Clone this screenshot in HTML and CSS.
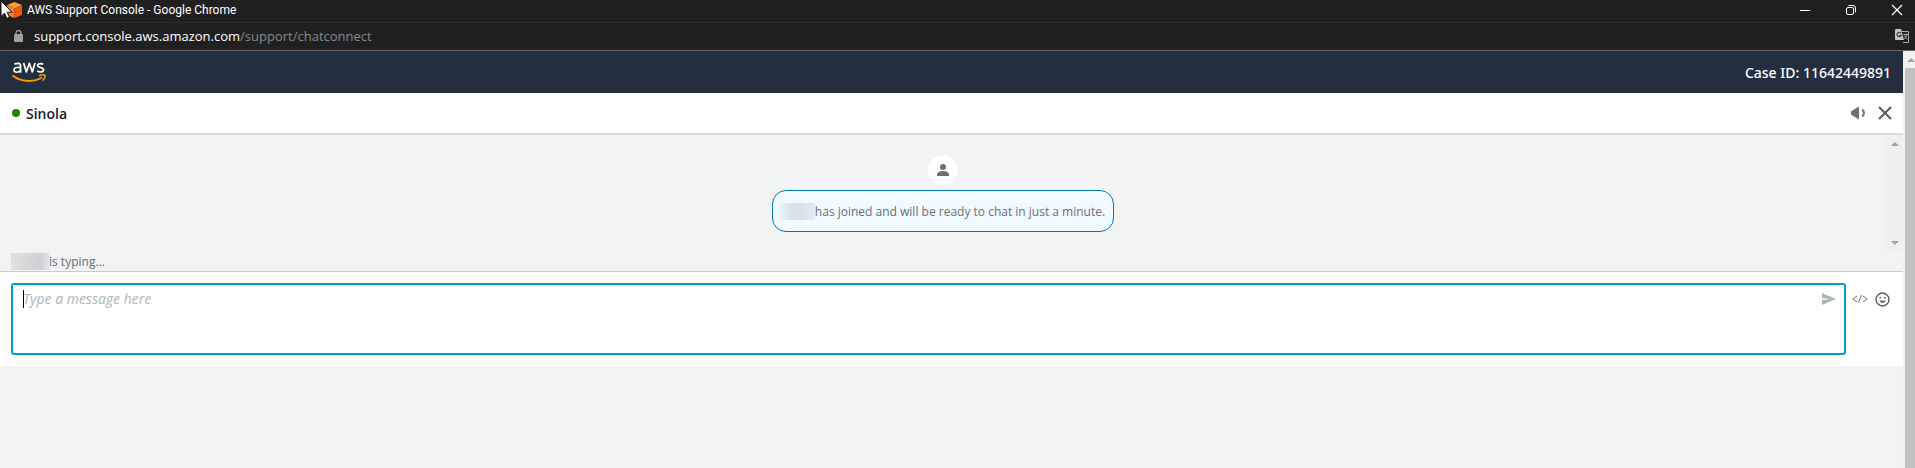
FILE: index.html
```
<!DOCTYPE html>
<html lang="en">
<head>
<meta charset="utf-8">
<title>AWS Support Console</title>
<link rel="stylesheet" href="styles.css">
</head>
<body>
<div class="titlebar">
  <svg class="app-icon" width="15" height="16" viewBox="0 0 15 16" aria-hidden="true">
    <path d="M7.500 0L15 3 7.500 6.500 0 3z" fill="#ff9d3a"/>
    <path d="M0 3l7.500 3.500V16L0 13z" fill="#f58220"/>
    <path d="M15 3L7.500 6.500V16l7.500-3z" fill="#e8590c"/>
  </svg>
  <span class="window-title">AWS Support Console - Google Chrome</span>
  <div class="window-controls">
    <button class="window-button" aria-label="Minimize"><svg width="12" height="12" viewBox="0 0 12 12"><path d="M1 6.500h10" stroke="#fff"/></svg></button>
    <button class="window-button" aria-label="Restore"><svg width="12" height="12" viewBox="0 0 12 12" fill="none" stroke="#fff"><rect x="1.500" y="3.500" width="7" height="7" rx="1.500"/><path d="M3.500 1.500h4.500a2.500 2.500 0 0 1 2.500 2.500v4.500"/></svg></button>
    <button class="window-button" aria-label="Close window"><svg width="12" height="12" viewBox="0 0 12 12"><path d="M1 1l10 10M11 1L1 11" stroke="#fff" stroke-width="1.200"/></svg></button>
  </div>
  <svg class="pointer" width="13" height="20" viewBox="0 0 13 20" aria-hidden="true"><path d="M1 1v15.500l3.500-3.300 2.300 5.300 2.700-1.200-2.300-5.100H12z" fill="#fff" stroke="#111"/></svg>
</div>
<div class="addressbar">
  <svg width="9" height="12" viewBox="0 0 9 12" aria-hidden="true"><path d="M2 5V3a2.500 2.500 0 0 1 5 0v2" fill="none" stroke="#9aa0a6" stroke-width="1.300"/><rect y="4" width="9" height="8" rx="1" fill="#9aa0a6"/></svg>
  <span class="url"><span class="host">support.console.aws.amazon.com</span>/support/chatconnect</span>
  <button class="translate" aria-label="Translate this page">
    <svg width="14" height="14" viewBox="0 0 14 14"><path d="M6 2.500h7.500v11H8" fill="none" stroke="#a8a8a8"/><path d="M0 1a1 1 0 0 1 1-1h5l3 11H1a1 1 0 0 1-1-1z" fill="#c4c4c4"/><path d="M6 4.200a2.200 2.200 0 1 0 .3 2H4.200" fill="none" stroke="#333" stroke-width="1.100"/><path d="M8.500 5.500H13M10.700 4.500v1M12 5.500c-.4 2-1.600 3.500-3 4.500M9.300 6.500c.7 1.500 1.700 2.700 3 3.500" fill="none" stroke="#a8a8a8"/></svg>
  </button>
</div>
<div class="viewport">
  <main class="page">
    <header class="nav">
      <svg width="36" height="24" viewBox="0 0 36 24" role="img" aria-label="aws" fill="none" stroke-linecap="butt">
        <g stroke="#fff" stroke-width="1.700" stroke-linejoin="round">
          <path d="M3.400 4.300C5.800 2.900 9.600 2.700 9.600 5.700v7.100M9.600 7.600C6.500 7 3 7.300 3 9.900c0 3.300 4.800 2.900 6.600.3"/>
          <path d="M12.600 3l2.800 9L18.300 3.300l3 8.700L24 3"/>
          <path d="M32.200 4.300c-1.800-.9-5.500-1-5.500 1.200 0 2.600 5.800 1.500 5.800 4.200 0 2.800-4.100 2.700-6.300 1.400"/>
        </g>
        <path d="M1.500 15.500c9 6.900 21 6.900 29.500 2" stroke="#f90" stroke-width="1.900"/>
        <path d="M28 15.800c2.500-.9 5.500-1 6-.4s-.4 3.500-2.300 5.200" stroke="#f90" stroke-width="1.500"/>
      </svg>
      <span class="case-id">Case ID: 11642449891</span>
    </header>
    <section class="agent-bar">
      <span class="status-dot"></span>
      <h1 class="agent-name">Sinola</h1>
      <button class="icon-button" aria-label="Sound"><svg width="14" height="14" viewBox="0 0 14 14"><path d="M0 5.500l3-2L8 .5v13l-5-3-3-2z" fill="#687078"/><path d="M11 3.800c2.600 1 2.600 5.400 0 6.400" fill="none" stroke="#687078" stroke-width="2"/></svg></button>
      <button class="icon-button" aria-label="End chat"><svg width="14" height="14" viewBox="0 0 14 14"><path d="M1 1l12 12M13 1L1 13" stroke="#545b64" stroke-width="2"/></svg></button>
    </section>
    <section class="chat">
      <div class="transcript">
        <div class="messages">
          <div class="avatar"><svg width="12" height="12" viewBox="0 0 12 12" fill="#687078"><circle cx="6" cy="3" r="3"/><path d="M0 12v-1.500C0 8.200 3 7 6 7s6 1.200 6 3.500V12z"/></svg></div>
          <p class="bubble"><span class="redacted redacted-blue"></span>has joined and will be ready to chat in just a minute.</p>
        </div>
        <div class="scroll-track" aria-hidden="true"><span class="arrow arrow-up"></span><span class="arrow arrow-down"></span></div>
      </div>
      <p class="typing"><span class="redacted redacted-grey"></span>is typing...</p>
    </section>
    <form class="composer">
      <div class="message-box">
        <textarea class="message-input" aria-label="Message" placeholder="Type a message here"></textarea>
        <span class="caret"></span>
        <button class="send" type="button" aria-label="Send"><svg width="14" height="12" viewBox="0 0 14 12"><path d="M0 0l14 6-14 6V7l8-1-8-1z" fill="#aab7b8"/></svg></button>
      </div>
      <button class="tool" type="button" aria-label="Insert code"><svg width="16" height="8" viewBox="0 0 16 8" fill="none" stroke="#687078"><path d="M5 1L1 4l4 3M11 1l4 3-4 3M9.500 0l-3 8"/></svg></button>
      <button class="tool" type="button" aria-label="Insert emoji"><svg width="15" height="15" viewBox="0 0 15 15"><circle cx="7.500" cy="7.500" r="6.500" fill="none" stroke="#545b64" stroke-width="1.400"/><circle cx="5.200" cy="5.700" r="0.900" fill="#545b64"/><circle cx="9.800" cy="5.700" r="0.900" fill="#545b64"/><path d="M4.500 8.500h6c-.5 3.300-5.500 3.300-6 0z" fill="#687078"/></svg></button>
    </form>
  </main>
  <div class="page-scrollbar" aria-hidden="true"><div class="scroll-head"><span class="arrow arrow-up"></span></div><div class="thumb"></div></div>
</div>
</body>
</html>
```
FILE: styles.css
```
* {
  box-sizing: border-box;
}

html,
body {
  height: 100%;
  margin: 0;
}

body {
  display: flex;
  flex-direction: column;
  overflow: hidden;
  background: #f2f3f3;
  color: #687078;
  font-family: "Open Sans", "Noto Sans", sans-serif;
  font-size: 12px;
}

button {
  display: flex;
  padding: 0;
  border: 0;
  background: none;
}

svg {
  display: block;
  flex: none;
}

.titlebar {
  position: relative;
  display: flex;
  align-items: center;
  flex: none;
  height: 23px;
  padding: 0 12px 2px 7px;
  border-bottom: 1px solid #2b2b2b;
  background: #202020;
  color: #fff;
  font-family: Roboto, "Open Sans", sans-serif;
}

.window-title {
  margin-left: 5px;
}

.window-controls {
  display: flex;
  gap: 34px;
  margin-left: auto;
}

.pointer {
  position: absolute;
  top: 0;
  left: 0;
}

.addressbar {
  display: flex;
  align-items: center;
  flex: none;
  height: 28px;
  padding: 0 6px 2px 14px;
  border-bottom: 1px solid #6b6661;
  background: #202020;
}

.url {
  margin-left: 11px;
  color: #85888b;
  font-size: 13px;
}

.host {
  color: #fff;
}

.translate {
  margin-left: auto;
}

.viewport {
  display: flex;
  flex: 1;
  min-height: 0;
}

.page {
  flex: 1;
  min-width: 0;
}

.nav {
  display: flex;
  align-items: center;
  justify-content: space-between;
  height: 42px;
  padding: 0 12px 0 11px;
  background: #232f3e;
}

.case-id {
  color: #fff;
  font-family: "Noto Sans", "Open Sans", sans-serif;
  font-size: 14px;
  font-weight: 500;
}

.agent-bar {
  display: flex;
  align-items: center;
  height: 42px;
  padding: 0 11px 0 12px;
  border-bottom: 2px solid #d5dbdb;
  background: #fff;
}

.status-dot {
  width: 8px;
  height: 8px;
  border-radius: 50%;
  background: #1d8102;
}

.agent-name {
  margin: 0 auto 0 6px;
  color: #16191f;
  font-size: 14px;
  font-weight: 600;
}

.icon-button {
  margin-left: 13px;
}

.chat {
  border-bottom: 1px solid #c8cccc;
}

.transcript {
  display: flex;
  height: 117px;
}

.messages {
  display: flex;
  flex: 1;
  flex-direction: column;
  align-items: center;
  gap: 5px;
  padding-top: 20px;
}

.avatar {
  display: grid;
  place-items: center;
  width: 30px;
  height: 30px;
  border-radius: 50%;
  background: #fff;
}

.bubble {
  display: flex;
  align-items: center;
  height: 42px;
  margin: 0;
  padding: 0 8px 0 4px;
  border: 1px solid #0073bb;
  border-radius: 14px;
  background: #f1faff;
}

.redacted {
  height: 17px;
}

.redacted-blue {
  width: 38px;
  background: linear-gradient(90deg, #f1faff, #dbe2ea 35%, #d9e0e8 65%, #e3ebf3);
}

.redacted-grey {
  width: 38px;
  background: linear-gradient(90deg, #dfe1e2, #d5d7d9 40%, #cfd1d4 80%, #e3e5e6);
}

.typing {
  display: flex;
  align-items: center;
  height: 19px;
  margin: 0;
  padding-left: 11px;
}

.scroll-track {
  display: flex;
  flex-direction: column;
  align-items: center;
  justify-content: space-between;
  width: 17px;
  padding: 7px 0;
  background: #f0f0f0;
}

.arrow {
  border: 4px solid transparent;
}

.arrow-up {
  border-top-width: 0;
  border-bottom-color: #a3a3a3;
}

.arrow-down {
  border-top-color: #a3a3a3;
  border-bottom-width: 0;
}

.composer {
  display: flex;
  align-items: flex-start;
  padding: 11px 13px 11px 11px;
  background: #fff;
}

.message-box {
  position: relative;
  display: flex;
  flex: 1;
  height: 72px;
  margin-right: 6px;
  border: 2px solid #00a1c9;
  border-radius: 3px;
}

.message-input {
  flex: 1;
  padding: 4px 10px;
  border: 0;
  outline: 0;
  background: none;
  font: 14px/20px "Open Sans", "Noto Sans", sans-serif;
  resize: none;
}

.message-input::placeholder {
  color: #aab7b8;
  font-style: italic;
}

.caret {
  position: absolute;
  top: 5px;
  left: 10px;
  width: 1px;
  height: 18px;
  background: #000;
}

.send {
  margin: 8px 8px 0 0;
  align-self: flex-start;
}

.tool {
  align-items: center;
  height: 32px;
}

.tool + .tool {
  margin-left: 7px;
}

.page-scrollbar {
  display: flex;
  flex-direction: column;
  width: 12px;
  padding-left: 2px;
  overflow: hidden;
  background: #f1f1f1;
}

.scroll-head {
  display: flex;
  justify-content: flex-end;
  height: 17px;
  padding: 7px 0;
}

.thumb {
  flex: 1;
  background: #c1c1c1;
}
```
